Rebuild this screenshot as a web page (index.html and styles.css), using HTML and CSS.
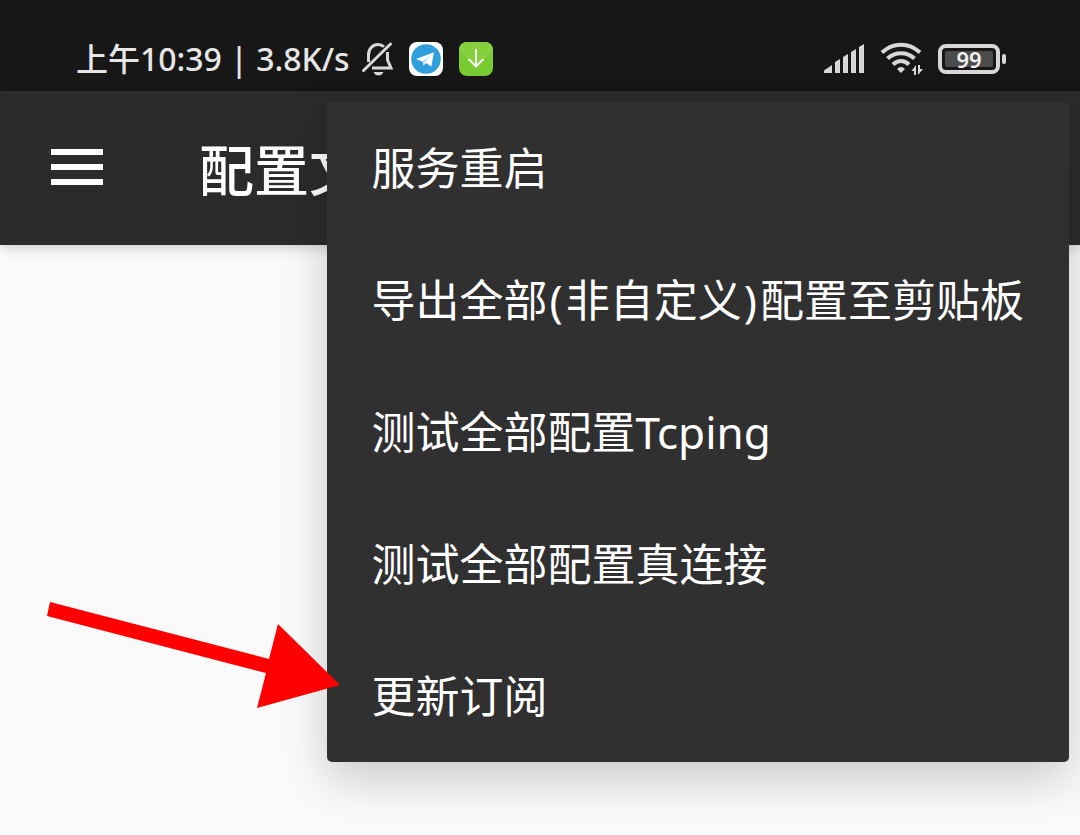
FILE: index.html
```html
<!DOCTYPE html>
<html lang="zh-CN">
<head>
<meta charset="utf-8">
<meta name="viewport" content="width=device-width, initial-scale=1">
<title>配置文件</title>
<link rel="stylesheet" href="styles.css">
</head>
<body>
<div class="status-bar">
  <div class="status-left">
    <span class="status-text">上午10:39 | 3.8K/s</span>
    <svg class="icon-bell" viewBox="0 0 34 36" aria-hidden="true">
      <path d="M7.500 21V14C7.500 8 11.500 3.500 17 3.500c2.500 0 4.500 .8 6 2.300M26.500 11v8l3.500 8H11" fill="none" stroke="#d8d8d8" stroke-width="3"/>
      <path d="M2.500 29.500L29.500 3" stroke="#d8d8d8" stroke-width="3" stroke-linecap="round"/>
      <path d="M12.500 31h10c-1 2.500-3 3.500-5 3.500S13.500 33.500 12.500 31z" fill="#d8d8d8"/>
    </svg>
    <svg class="icon-app" viewBox="0 0 34 34" aria-hidden="true">
      <rect width="34" height="34" rx="8" fill="#fff"/>
      <circle cx="17" cy="17" r="14.800" fill="#2f9fdb"/>
      <path d="M7 17L25 10.300L22.300 24.500L17 21L14.500 23.500L13.500 19.500z" fill="#fff"/>
      <path d="M13.500 19.500L22 13L15.500 20.500L14.500 23.500z" fill="#b5d9ee"/>
    </svg>
    <svg class="icon-app" viewBox="0 0 34 34" aria-hidden="true">
      <rect width="34" height="34" rx="8" fill="#78cb30"/>
      <path d="M0 9V8a8 8 0 0 1 8-8h18a8 8 0 0 1 8 8v1L17 24z" fill="#86d040"/>
      <path d="M17 7v17M9.500 17L17 24.500L24.500 17" fill="none" stroke="#fff" stroke-width="1.800"/>
    </svg>
  </div>
  <div class="status-right">
    <svg class="icon-signal" viewBox="0 0 40 30" aria-hidden="true">
      <path d="M0 29v-2.500L8 21v8zM11 29V18l5-3v14zM19 29V13l5-3v19zM27 29V8l5-3v24zM35 29V3l5-3v29z" fill="#d8d8d8"/>
    </svg>
    <svg class="icon-wifi" viewBox="0 0 44 34" aria-hidden="true">
      <path d="M2 10.500C13 0 29 0 40 10.500M7.500 16.500C15 9.500 27 9.500 34.500 16.500M13 22.500c5-4.600 11-4.600 16 0" fill="none" stroke="#d8d8d8" stroke-width="4"/>
      <path d="M17 27q4-4 8 0L21 31z" fill="#d8d8d8"/>
      <path d="M36 23v10h-2v-4h-2.500zM38 33V23h2v4h3z" fill="#d8d8d8"/>
    </svg>
    <div class="battery">
      <span class="battery-level">99</span>
    </div>
  </div>
</div>
<header class="app-bar">
  <button class="nav-button" type="button" aria-label="导航">
    <span class="nav-line"></span>
    <span class="nav-line"></span>
    <span class="nav-line"></span>
  </button>
  <h1 class="title">配置文件</h1>
</header>
<main class="content"></main>
<div class="menu" role="menu">
  <button class="menu-item" type="button" role="menuitem">服务重启</button>
  <button class="menu-item" type="button" role="menuitem">导出全部<span class="paren">(</span>非自定义<span class="paren">)</span>配置至剪贴板</button>
  <button class="menu-item" type="button" role="menuitem">测试全部配置Tcping</button>
  <button class="menu-item" type="button" role="menuitem">测试全部配置真连接</button>
  <button class="menu-item" type="button" role="menuitem">更新订阅</button>
</div>
<svg class="pointer-arrow" viewBox="0 0 296 86" aria-hidden="true">
  <path d="M3 0L222 57L231 22L293 83L210 106L219 71L0 14z" fill="#f00"/>
</svg>
</body>
</html>
```
FILE: styles.css
```css
* {
  box-sizing: border-box;
}

body {
  margin: 0;
  min-height: 100vh;
  display: flex;
  flex-direction: column;
  position: relative;
  overflow: hidden;
  background: #fafafa;
  font-family: "Noto Sans", "Noto Sans CJK SC", sans-serif;
}

button {
  margin: 0;
  border: 0;
  background: none;
  color: inherit;
  font: inherit;
}

.status-bar {
  height: 91px;
  padding: 27px 80px 0 76px;
  display: flex;
  justify-content: space-between;
  align-items: flex-start;
  background: #171717;
  color: #e6e6e6;
}

.status-left,
.status-right {
  height: 64px;
  display: flex;
  align-items: center;
}

.status-text {
  font-size: 32px;
  line-height: 64px;
  font-weight: 500;
  white-space: nowrap;
}

.icon-bell {
  width: 34px;
  height: 36px;
  margin: 0 14px 0 11px;
}

.icon-app {
  width: 34px;
  height: 34px;
  margin-right: 16px;
}

.icon-signal {
  width: 40px;
  height: 30px;
}

.icon-wifi {
  width: 44px;
  height: 34px;
  margin: 0 14px 0 16px;
}

.battery {
  position: relative;
  width: 62px;
  height: 30px;
  padding: 3px;
  border: 4px solid #d8d8d8;
  border-radius: 8px;
}

.battery::after {
  content: "";
  position: absolute;
  top: 6px;
  right: -10px;
  width: 4px;
  height: 10px;
  border-radius: 2px;
  background: #d8d8d8;
}

.battery-level {
  display: block;
  height: 16px;
  border-radius: 2px;
  background: #4b4b4b;
  color: #f0f0f0;
  font-size: 22px;
  font-weight: 600;
  line-height: 16px;
  text-align: center;
}

.app-bar {
  height: 154px;
  padding: 0 51px;
  display: flex;
  align-items: center;
  gap: 96px;
  background: #2b2b2b;
  color: #fff;
  box-shadow: 0 2px 12px rgba(0, 0, 0, 0.2);
}

.nav-button {
  width: 52px;
  padding: 0 0 2px;
  display: flex;
  flex-direction: column;
  gap: 9px;
}

.nav-line {
  height: 6px;
  background: #fff;
}

.title {
  margin: 0;
  padding-top: 4px;
  font-size: 55px;
  font-weight: 500;
  line-height: 80px;
  white-space: nowrap;
}

.content {
  flex: 1;
}

.menu {
  position: absolute;
  top: 102px;
  right: 11px;
  padding: 0;
  border-radius: 5px;
  background: #303030;
  color: #fff;
  box-shadow: 0 16px 48px rgba(0, 0, 0, 0.2);
}

.menu-item {
  display: block;
  width: 100%;
  height: 132px;
  padding: 0 45px;
  font-size: 44px;
  line-height: 64px;
  text-align: left;
  white-space: nowrap;
}

.paren {
  padding: 0 3px 0 2px;
}

.pointer-arrow {
  position: absolute;
  top: 602px;
  left: 47px;
  width: 296px;
  height: 86px;
  overflow: visible;
}
```
